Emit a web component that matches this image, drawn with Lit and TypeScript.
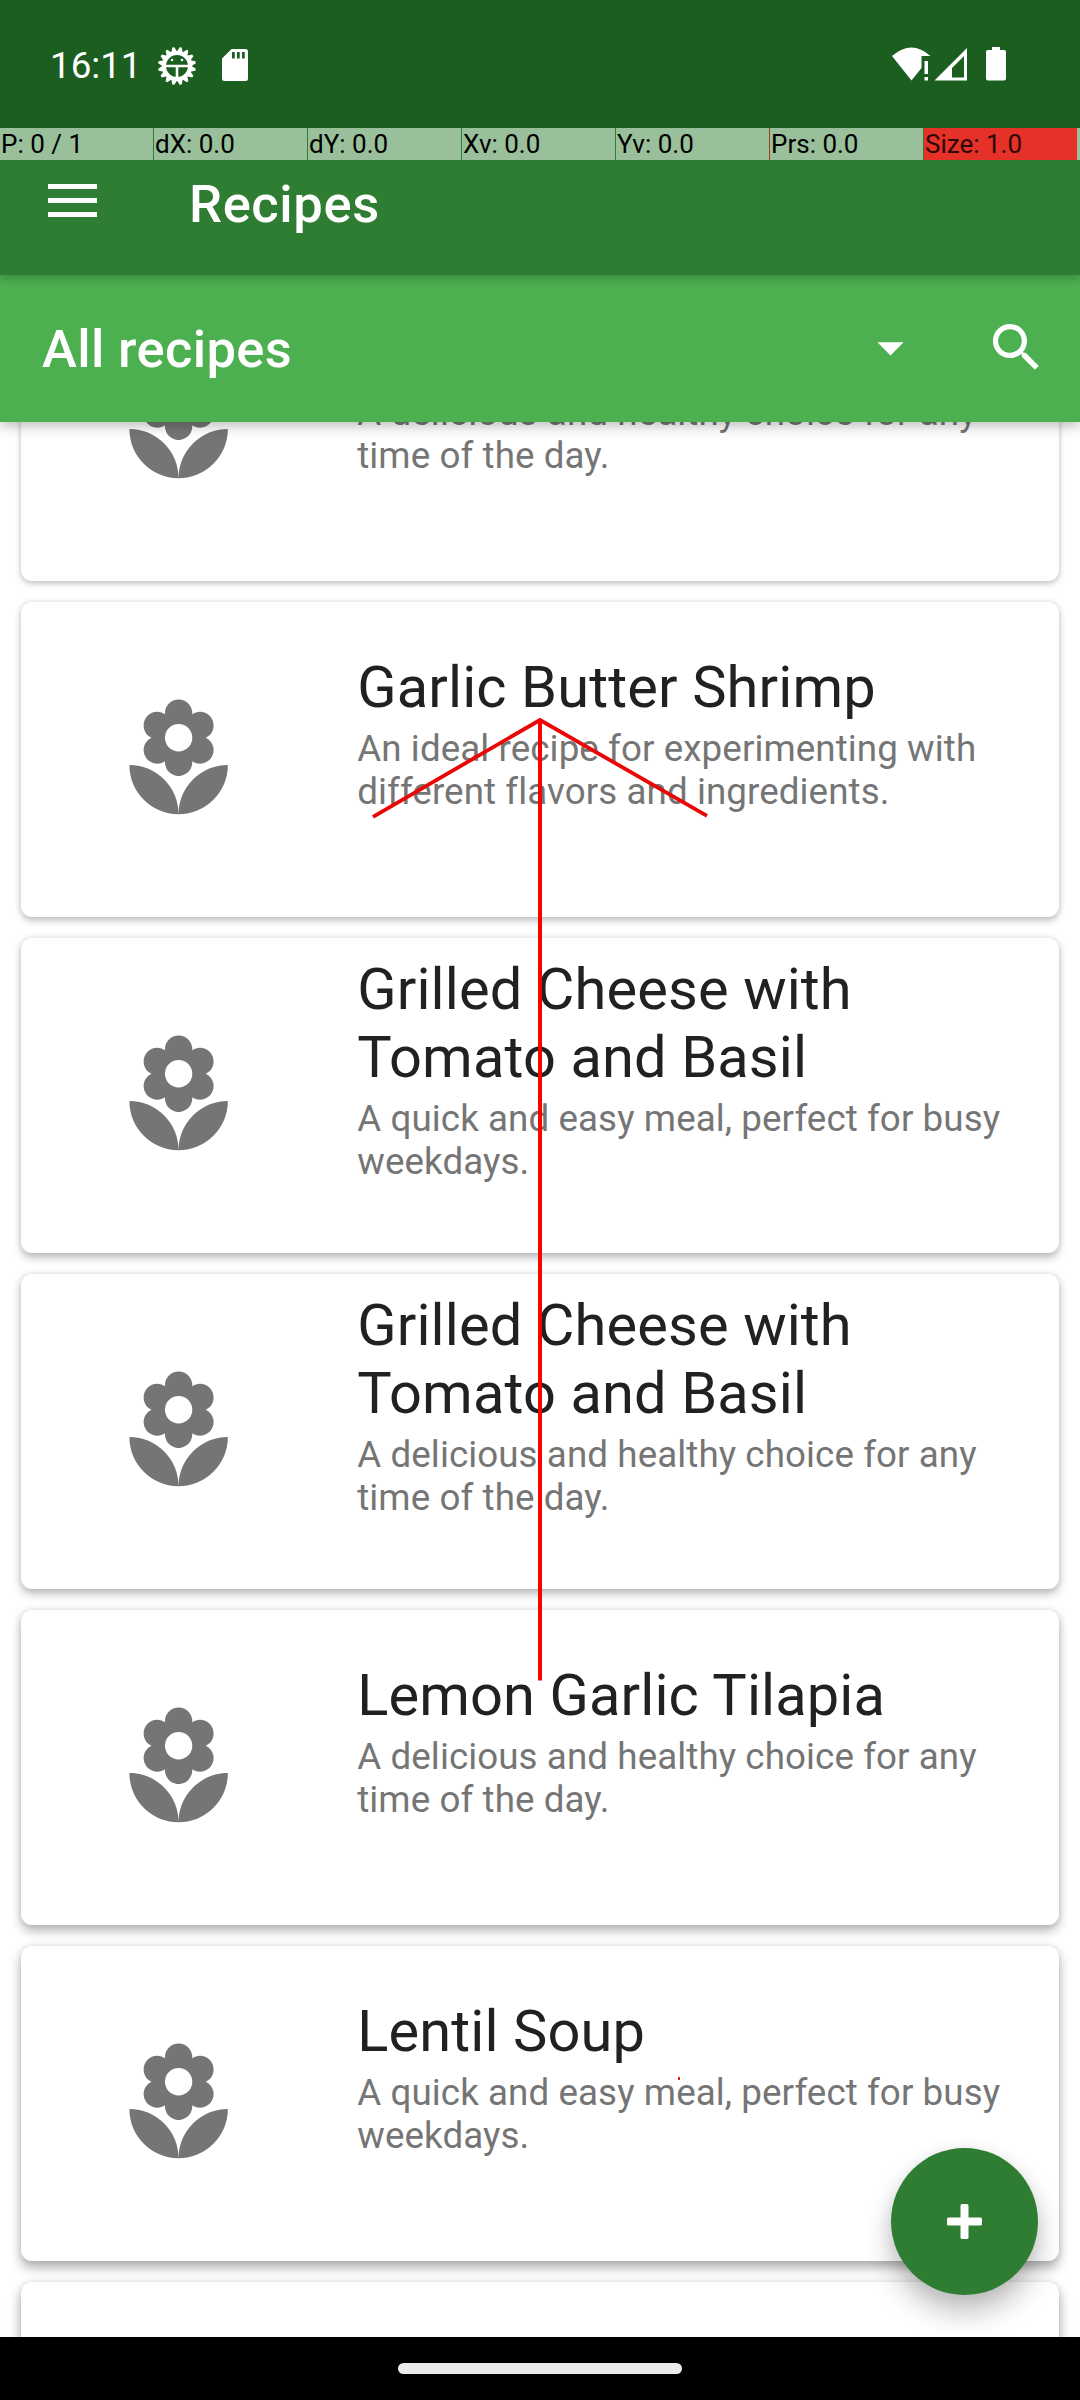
import { LitElement, html, css, svg } from "lit";
import { customElement, property } from "lit/decorators.js";

interface Recipe { title: string; text: string; }

const DELICIOUS = "A delicious and healthy choice for any time of the day.";
const QUICK = "A quick and easy meal, perfect for busy weekdays.";

const RECIPES: Recipe[] = [
  { title: "", text: DELICIOUS },
  { title: "Garlic Butter Shrimp", text: "An ideal recipe for experimenting with different flavors and ingredients." },
  { title: "Grilled Cheese with Tomato and Basil", text: QUICK },
  { title: "Grilled Cheese with Tomato and Basil", text: DELICIOUS },
  { title: "Lemon Garlic Tilapia", text: DELICIOUS },
  { title: "Lentil Soup", text: QUICK },
  { title: "", text: "" },
];

const POINTER_CELLS = ["P: 0 / 1", "dX: 0.0", "dY: 0.0", "Xv: 0.0", "Yv: 0.0", "Prs: 0.0", "Size: 1.0"];

@customElement("recipe-card")
export class RecipeCard extends LitElement {
  @property() heading = "";
  @property() text = "";

  static styles = css`
    :host { display: flex; flex: none; align-items: center; box-sizing: border-box; height: 315px;
      padding-left: 92px; background: #fff; border-radius: 11px;
      box-shadow: 0 var(--drop, 3px) var(--soft, 7px) rgba(0,0,0,var(--shade, .2)), 0 0 6px rgba(0,0,0,.1); }
    .flower { width: 131.25px; height: 131.25px; flex: none; fill: #757575; }
    .body { margin-left: 113px; width: 662px; padding-bottom: 54px; display: flex; flex-direction: column; gap: 6px; }
    .title { min-height: 68px; font-size: 57.75px; line-height: 68px; letter-spacing: .13px; color: #212121; }
    .text { font-size: 36.75px; line-height: 43px; letter-spacing: .08px; color: #757575; font-variant-ligatures: common-ligatures; }
  `;

  render() {
    return html`
      <svg class="flower" viewBox="0 0 24 24">
        <path d="M12 22c4.97 0 9-4.03 9-9-4.97 0-9 4.03-9 9zM5.6 10.25c0 1.38 1.12 2.5 2.5 2.5.53 0 1.01-.16 1.42-.44l-.02.19c0 1.38 1.12 2.5 2.5 2.5s2.5-1.12 2.5-2.5l-.02-.19c.4.28.89.44 1.42.44 1.38 0 2.5-1.12 2.5-2.5 0-1-.59-1.85-1.43-2.25.84-.4 1.43-1.25 1.43-2.25 0-1.38-1.12-2.5-2.5-2.5-.53 0-1.01.16-1.42.44l.02-.19C14.5 2.12 13.38 1 12 1S9.5 2.12 9.5 3.5l.02.19c-.4-.28-.89-.44-1.42-.44-1.38 0-2.5 1.12-2.5 2.5 0 1 .59 1.85 1.43 2.25-.84.4-1.43 1.25-1.43 2.25zM12 5.5c1.38 0 2.5 1.12 2.5 2.5s-1.12 2.5-2.5 2.5S9.5 9.38 9.5 8s1.12-2.5 2.5-2.5zM3 13c0 4.97 4.03 9 9 9 0-4.97-4.03-9-9-9z"/>
      </svg>
      <div class="body">
        <div class="title">${this.heading}</div>
        <div class="text">${this.text}</div>
      </div>`;
  }
}

@customElement("app-root")
export class AppRoot extends LitElement {
  static styles = css`
    :host { display: flex; flex-direction: column; position: relative; width: 1080px; height: 2400px;
      overflow: hidden; background: #fff; font-family: Roboto, "Liberation Sans", sans-serif; }
    svg { display: block; flex: none; }
    .status { flex: none; box-sizing: border-box; height: 128px; padding: 2px 69px 0 50px; display: flex; align-items: flex-start;
      background: #1b5e20; color: #fff; }
    .clock { font-size: 36.75px; line-height: 44px; margin-top: 42px; width: 109px; white-space: nowrap; }
    .gear { margin: 44px 0 0 -1px; }
    .sd { margin: 47px 0 0 26px; }
    .spacer { flex: 1; }
    .signals { margin-top: 44px; }
    .pointer { flex: none; height: 32px; display: flex; gap: 1px; background: #2e7d32; z-index: 3; }
    .cell { box-sizing: border-box; width: 153px; padding-left: 1px; background: #99bf9b; color: #000;
      font-size: 26px; line-height: 32px; white-space: nowrap; }
    .cell.hot { background: #e53127; color: #2b0906; }
    .cell.warm { box-shadow: -1px 0 #a53b22; }
    .tail { flex: 1; margin-left: -1px; background: #99bf9b; }
    .toolbar { flex: none; box-sizing: border-box; height: 115px; padding: 24px 0 0 48px; display: flex; align-items: flex-start;
      background: #2e7d32; color: #fff; z-index: 2; box-shadow: 0 3px 9px rgba(0,0,0,.24); }
    .page-title { margin: -11px 0 0 92px; font-size: 52.5px; line-height: 62px; font-weight: 500; letter-spacing: .6px; }
    .filter { flex: none; box-sizing: border-box; height: 147px; padding: 0 32px 0 42px; display: flex; align-items: center;
      background: #4caf50; color: #fff; z-index: 1; box-shadow: 0 4px 12px rgba(0,0,0,.26); }
    .filter-name { flex: 1; font-size: 52.5px; line-height: 62px; font-weight: 500; letter-spacing: .35px; }
    .filter svg { width: 63px; height: 63px; fill: #fff; margin-bottom: 2px; }
    .search { margin-left: 63px; }
    .list { flex: 1; min-height: 0; overflow: hidden; display: flex; flex-direction: column; gap: 21px; padding: 0 21px; }
    .list recipe-card:first-child { margin-top: -156px; }
    .nav { flex: none; height: 63px; background: #000; display: flex; justify-content: center; align-items: center; z-index: 5; }
    .pill { width: 284px; height: 11px; border-radius: 6px; background: #ebebeb; }
    .fab { position: absolute; left: 891px; top: 2148px; width: 147px; height: 147px; border-radius: 50%; background: #2e7d32;
      display: flex; align-items: center; justify-content: center; z-index: 4;
      box-shadow: 0 18px 28px rgba(0,0,0,.24), 0 2px 16px rgba(0,0,0,.08); }
    .gesture { position: absolute; left: 0; top: 0; z-index: 6; pointer-events: none; }
  `;

  private gear() {
    const teeth = Array.from({ length: 16 }, (_, i) =>
      svg`<path d="M-3 -14L-1 -19H1L3 -14Z" fill="#fff" transform="rotate(${i * 22.5 + 11.25})"/>`);
    return html`<svg class="gear" width="38" height="40" viewBox="-19 -20 38 40">
      ${teeth}
      <circle r="13" fill="none" stroke="#fff" stroke-width="4"/>
      <path d="M-12 0H12M0 0V13" stroke="#fff" stroke-width="2.6"/>
      <circle cx="-5" cy="-6" r="1.3" fill="#fff"/><circle cx="5" cy="-6" r="1.3" fill="#fff"/>
    </svg>`;
  }

  /* Cards further down the screen sit farther from the light and cast a longer shadow. */
  private shadow(i: number) {
    return `--drop:${2.5 + i * 0.8}px;--soft:${6 + i * 1.1}px;--shade:${(0.19 + i * 0.022).toFixed(3)}`;
  }

  render() {
    return html`
      <div class="status">
        <div class="clock">16:11</div>
        ${this.gear()}
        <svg class="sd" width="26" height="32" viewBox="0 0 26 32">
          <path fill="#fff" fill-rule="evenodd" d="M9.5 0H23.5Q26 0 26 2.5V29.5Q26 32 23.5 32H2.5Q0 32 0 29.5V9.5ZM10 3V9.5H12.7V3ZM15 3V9.5H17.7V3ZM20 3V9.5H22.7V3Z"/>
        </svg>
        <div class="spacer"></div>
        <svg class="signals" width="119" height="38" viewBox="0 0 119 38">
          <g fill="#fff">
            <path d="M0 10Q19.5 -7 38.5 10H29.5V22L19.5 34.5Z"/>
            <path d="M32.5 15H36V28H32.5ZM32.5 31H36V34.5H32.5Z"/>
            <path fill-rule="evenodd" d="M42.5 34.500L75 2V34.500ZM60 22V31.500H72V10Z"/>
            <path d="M100 1H108V4H112Q114 4 114 6V32.500Q114 34.500 112 34.500H96Q94 34.500 94 32.500V6Q94 4 96 4H100Z"/>
          </g>
        </svg>
      </div>
      <div class="pointer">
        ${POINTER_CELLS.map((c, i) => html`<div class="cell ${i === 6 ? "hot" : i === 5 ? "warm" : ""}">${c}</div>`)}
        <div class="tail"></div>
      </div>
      <div class="toolbar">
        <svg width="49" height="33" viewBox="0 0 49 33"><path fill="#fff" d="M0 0H49V5H0ZM0 14H49V19H0ZM0 28H49V33H0Z"/></svg>
        <div class="page-title">Recipes</div>
      </div>
      <div class="filter">
        <div class="filter-name">All recipes</div>
        <svg viewBox="0 0 24 24"><path d="M7 10l5 5 5-5z"/></svg>
        <svg class="search" viewBox="0 0 24 24"><path d="M15.5 14h-.79l-.28-.27C15.41 12.59 16 11.11 16 9.5 16 5.91 13.09 3 9.5 3S3 5.91 3 9.5 5.91 16 9.5 16c1.61 0 3.09-.59 4.23-1.57l.27.28v.79l5 4.99L20.49 19l-4.99-5zm-6 0C7.01 14 5 11.99 5 9.5S7.01 5 9.5 5 14 7.01 14 9.5 11.99 14 9.5 14z"/></svg>
      </div>
      <div class="list">
        ${RECIPES.map((r, i) => html`<recipe-card style=${this.shadow(i)} .heading=${r.title} .text=${r.text}></recipe-card>`)}
      </div>
      <div class="nav"><div class="pill"></div></div>
      <div class="fab">
        <svg width="35" height="35" viewBox="0 0 35 35"><path fill="#fff" d="M15 0H20Q21.500 0 21.500 1.500V13.500H33.500Q35 13.500 35 15V20Q35 21.500 33.500 21.500H21.500V33.500Q21.500 35 20 35H15Q13.500 35 13.500 33.500V21.500H1.500Q0 21.500 0 20V15Q0 13.500 1.500 13.500H13.500V1.500Q13.500 0 15 0Z"/></svg>
      </div>
      <svg class="gesture" width="1080" height="2400" viewBox="0 0 1080 2400">
        <path d="M373 816.8L540 720L707 815.8" fill="none" stroke="#ea0606" stroke-width="3.8"/>
        <path d="M540 720V1680.5" stroke="#f00" stroke-width="4"/>
        <rect x="678" y="2077" width="2" height="3" fill="#e02020"/>
      </svg>`;
  }
}
